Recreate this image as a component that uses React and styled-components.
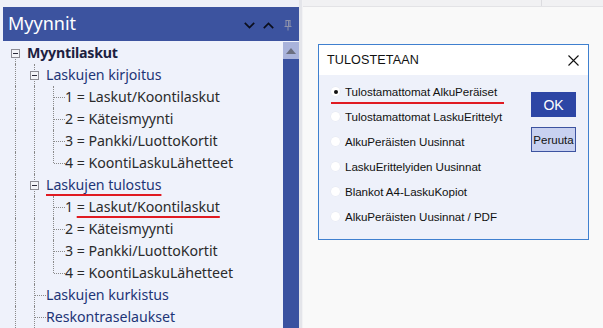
import React from "react";
import styled, { createGlobalStyle } from "styled-components";

const Global = createGlobalStyle`
  html, body { margin: 0; padding: 0; background: #f9f9f9; }
  * { box-sizing: border-box; }
`;

const Screen = styled.div`
  width: 603px;
  height: 328px;
  overflow: hidden;
  display: flex;
  background: #f9f9f9;
`;

const LeftPanel = styled.div`
  width: 299px;
  flex: none;
  display: flex;
  flex-direction: column;
  background: #eff2fb;
`;

const TopStrip = styled.div`
  height: 7px;
  flex: none;
  background: #eef0f8;
`;

const Header = styled.div`
  height: 34px;
  flex: none;
  margin-left: 3px;
  background: #3c539f;
  display: flex;
  align-items: center;
  padding-left: 5px;
  padding-right: 7px;
`;

const HeaderTitle = styled.div`
  flex: 1;
  color: #ffffff;
  font-family: "Noto Sans", "Open Sans", sans-serif;
  font-size: 18px;
  line-height: 1;
  padding-bottom: 2px;
`;

const HeaderIcons = styled.div`
  display: flex;
  align-items: center;
  gap: 8px;
  margin-top: 2px;
`;

const PinWrap = styled.span`
  display: flex;
  margin-left: 2px;
`;

const PanelBody = styled.div`
  flex: 1;
  display: flex;
  min-height: 0;
`;

const Tree = styled.div`
  flex: 1;
  padding-top: 1px;
  padding-left: 6px;
  display: flex;
  flex-direction: column;
`;

const ScrollBar = styled.div`
  width: 16px;
  flex: none;
  margin-top: 1px;
  background: #3a52a0;
  display: flex;
  flex-direction: column;
`;

const ScrollUp = styled.div`
  height: 17px;
  background: #a9b3db;
  display: flex;
  align-items: center;
  justify-content: center;
`;

const Divider = styled.div`
  width: 4px;
  flex: none;
  background: #e4e5ea;
  border-right: 1px solid #f2f2f4;
`;

const Row = styled.div`
  height: 22px;
  flex: none;
  display: flex;
  align-items: stretch;
`;

const Cell = styled.div`
  width: 19px;
  flex: none;
  position: relative;
  &::before {
    content: "";
    position: absolute;
    left: 9px;
    top: ${(p) => (p.$vTop ? "0" : "11px")};
    bottom: ${(p) => (p.$vBottom ? "0" : "11px")};
    border-left: 1px dotted #8a8a8a;
    display: ${(p) => (p.$vTop || p.$vBottom ? "block" : "none")};
  }
  &::after {
    content: "";
    position: absolute;
    left: 10px;
    right: -2px;
    top: 11px;
    border-top: 1px dotted #8a8a8a;
    display: ${(p) => (p.$h ? "block" : "none")};
  }
`;

const Expander = styled.div`
  position: absolute;
  left: 5px;
  top: 7px;
  width: 9px;
  height: 9px;
  border: 1px solid #8d8d95;
  background: #f3f4f8;
  z-index: 1;
  &::after {
    content: "";
    position: absolute;
    left: 1px;
    right: 1px;
    top: 3px;
    border-top: 1px solid #2a2a3a;
  }
`;

const Label = styled.div`
  margin-left: 2px;
  font-family: "Noto Sans", "Open Sans", sans-serif;
  font-size: 14.2px;
  line-height: 22px;
  white-space: nowrap;
  color: ${(p) => (p.$level === 0 ? "#1c2140" : p.$level === 1 ? "#1e3577" : "#2b2b2b")};
  font-weight: ${(p) => (p.$level === 0 ? 700 : 400)};
  letter-spacing: ${(p) => (p.$level === 0 ? "-0.2px" : "-0.05px")};
`;

const Mark = styled.span`
  text-decoration: underline;
  text-decoration-color: #e01b22;
  text-decoration-thickness: 2px;
  text-underline-offset: 4px;
`;

const RightArea = styled.div`
  flex: 1;
  display: flex;
  flex-direction: column;
  background: #f9f9f9;
`;

const RightTop = styled.div`
  height: 7px;
  flex: none;
  background: #f1f1f3;
  border-bottom: 1px solid #e3e3e6;
  position: relative;
  &::after {
    content: "";
    position: absolute;
    left: 238px;
    top: 0;
    bottom: 0;
    border-left: 1px solid #dcdce0;
  }
`;

const DialogArea = styled.div`
  padding-top: 37px;
  padding-left: 15px;
`;

const Dialog = styled.div`
  width: 271px;
  height: 196px;
  border: 1px solid #3f80cf;
  background: #eef1fa;
  display: flex;
  flex-direction: column;
`;

const DialogTitleBar = styled.div`
  height: 30px;
  flex: none;
  background: #ffffff;
  display: flex;
  align-items: center;
  justify-content: space-between;
  padding-left: 8px;
  padding-right: 9px;
`;

const DialogTitle = styled.div`
  font-family: "Liberation Sans", Arial, sans-serif;
  font-size: 12.6px;
  color: #111;
  letter-spacing: 0.1px;
`;

const DialogBody = styled.div`
  flex: 1;
  display: flex;
  padding-left: 12px;
  padding-top: 4px;
`;

const Options = styled.div`
  flex: 1;
  display: flex;
  flex-direction: column;
`;

const Option = styled.div`
  height: 25px;
  display: flex;
  align-items: center;
  position: relative;
  align-self: flex-start;
  &::after {
    content: "";
    position: absolute;
    left: 0px;
    right: -7px;
    bottom: 0px;
    height: 2px;
    background: #e01b22;
    display: ${(p) => (p.$marked ? "block" : "none")};
  }
`;

const Radio = styled.span`
  width: 9px;
  height: 9px;
  border-radius: 50%;
  background: #ffffff;
  box-shadow: 0 0 0 0.5px #e6e8f0;
  margin-right: 5px;
  position: relative;
  flex: none;
  &::after {
    content: "";
    position: absolute;
    left: 2.5px;
    top: 2.5px;
    width: 4px;
    height: 4px;
    border-radius: 50%;
    background: #111;
    display: ${(p) => (p.$checked ? "block" : "none")};
  }
`;

const OptionText = styled.span`
  font-family: "Liberation Sans", Arial, sans-serif;
  font-size: 11.6px;
  color: #111;
  letter-spacing: -0.05px;
`;

const Buttons = styled.div`
  width: 57px;
  flex: none;
  display: flex;
  flex-direction: column;
  gap: 10px;
  padding-top: 13px;
`;

const Button = styled.div`
  width: 45px;
  height: 25px;
  display: flex;
  align-items: center;
  justify-content: center;
  font-family: "Liberation Sans", Arial, sans-serif;
  font-size: ${(p) => (p.$primary ? "14px" : "11.5px")};
  color: ${(p) => (p.$primary ? "#ffffff" : "#111")};
  background: ${(p) => (p.$primary ? "#2d46a5" : "#c8d1f0")};
  border: 1px solid ${(p) => (p.$primary ? "#2d46a5" : "#3c53a0")};
`;

const Chevron = ({ up }) => (
  <svg width="11" height="7" viewBox="0 0 11 7">
    <path
      d={up ? "M0.8 6.2 L5.5 1.5 L10.2 6.2" : "M0.8 0.8 L5.5 5.5 L10.2 0.8"}
      fill="none"
      stroke="#0b0e1c"
      strokeWidth="1.7"
    />
  </svg>
);

const Pin = () => (
  <svg width="8" height="11" viewBox="0 0 8 11">
    <path d="M1.5 0.5 H6.5 M2 0.5 V6 M6 0.5 V6 M0.5 6.5 H7.5 M4 6.5 V10.5 M4.5 1 V6" fill="none" stroke="#8d92ab" strokeWidth="1" />
  </svg>
);

const CloseX = () => (
  <svg width="11" height="11" viewBox="0 0 11 11">
    <path d="M0.5 0.5 L10.5 10.5 M10.5 0.5 L0.5 10.5" stroke="#111" strokeWidth="1.1" fill="none" />
  </svg>
);

const UpTriangle = () => (
  <svg width="10" height="6" viewBox="0 0 10 6">
    <path d="M0 6 L5 0 L10 6 Z" fill="#6b6f80" />
  </svg>
);

const mid = { vTop: true, vBottom: true };
const rows = [
  { level: 0, text: "Myyntilaskut", cells: [{ box: true, vBottom: true }] },
  { level: 1, text: "Laskujen kirjoitus", cells: [mid, { box: true, ...mid }] },
  { level: 2, text: "1 = Laskut/Koontilaskut", cells: [mid, mid, { ...mid, h: true }] },
  { level: 2, text: "2 = Käteismyynti", cells: [mid, mid, { ...mid, h: true }] },
  { level: 2, text: "3 = Pankki/LuottoKortit", cells: [mid, mid, { ...mid, h: true }] },
  { level: 2, text: "4 = KoontiLaskuLähetteet", cells: [mid, mid, { vTop: true, h: true }] },
  { level: 1, mark: "all", text: "Laskujen tulostus", cells: [mid, { box: true, ...mid }] },
  { level: 2, mark: "tail", text: "1 = Laskut/Koontilaskut", cells: [mid, mid, { ...mid, h: true }] },
  { level: 2, text: "2 = Käteismyynti", cells: [mid, mid, { ...mid, h: true }] },
  { level: 2, text: "3 = Pankki/LuottoKortit", cells: [mid, mid, { ...mid, h: true }] },
  { level: 2, text: "4 = KoontiLaskuLähetteet", cells: [mid, mid, { vTop: true, h: true }] },
  { level: 1, text: "Laskujen kurkistus", cells: [mid, { ...mid, h: true }] },
  { level: 1, text: "Reskontraselaukset", cells: [mid, { ...mid, h: true }] },
];

const options = [
  "Tulostamattomat AlkuPeräiset",
  "Tulostamattomat LaskuErittelyt",
  "AlkuPeräisten Uusinnat",
  "LaskuErittelyiden Uusinnat",
  "Blankot A4-LaskuKopiot",
  "AlkuPeräisten Uusinnat / PDF",
];

function renderText(r) {
  if (r.mark === "all") return <Mark>{r.text}</Mark>;
  if (r.mark === "tail") {
    return (
      <>
        {r.text.slice(0, 2)}
        <Mark>{r.text.slice(2)}</Mark>
      </>
    );
  }
  return r.text;
}

export default function App() {
  return (
    <>
      <Global />
      <Screen>
        <LeftPanel>
          <TopStrip />
          <Header>
            <HeaderTitle>Myynnit</HeaderTitle>
            <HeaderIcons>
              <Chevron />
              <Chevron up />
              <PinWrap>
                <Pin />
              </PinWrap>
            </HeaderIcons>
          </Header>
          <PanelBody>
            <Tree>
              {rows.map((r, i) => (
                <Row key={i}>
                  {r.cells.map((c, j) => (
                    <Cell key={j} $vTop={c.vTop} $vBottom={c.vBottom} $h={c.h}>
                      {c.box && <Expander />}
                    </Cell>
                  ))}
                  <Label $level={r.level}>{renderText(r)}</Label>
                </Row>
              ))}
            </Tree>
            <ScrollBar>
              <ScrollUp>
                <UpTriangle />
              </ScrollUp>
            </ScrollBar>
          </PanelBody>
        </LeftPanel>
        <Divider />
        <RightArea>
          <RightTop />
          <DialogArea>
            <Dialog>
              <DialogTitleBar>
                <DialogTitle>TULOSTETAAN</DialogTitle>
                <CloseX />
              </DialogTitleBar>
              <DialogBody>
                <Options>
                  {options.map((o, i) => (
                    <Option key={i} $marked={i === 0}>
                      <Radio $checked={i === 0} />
                      <OptionText>{o}</OptionText>
                    </Option>
                  ))}
                </Options>
                <Buttons>
                  <Button $primary>OK</Button>
                  <Button>Peruuta</Button>
                </Buttons>
              </DialogBody>
            </Dialog>
          </DialogArea>
        </RightArea>
      </Screen>
    </>
  );
}
